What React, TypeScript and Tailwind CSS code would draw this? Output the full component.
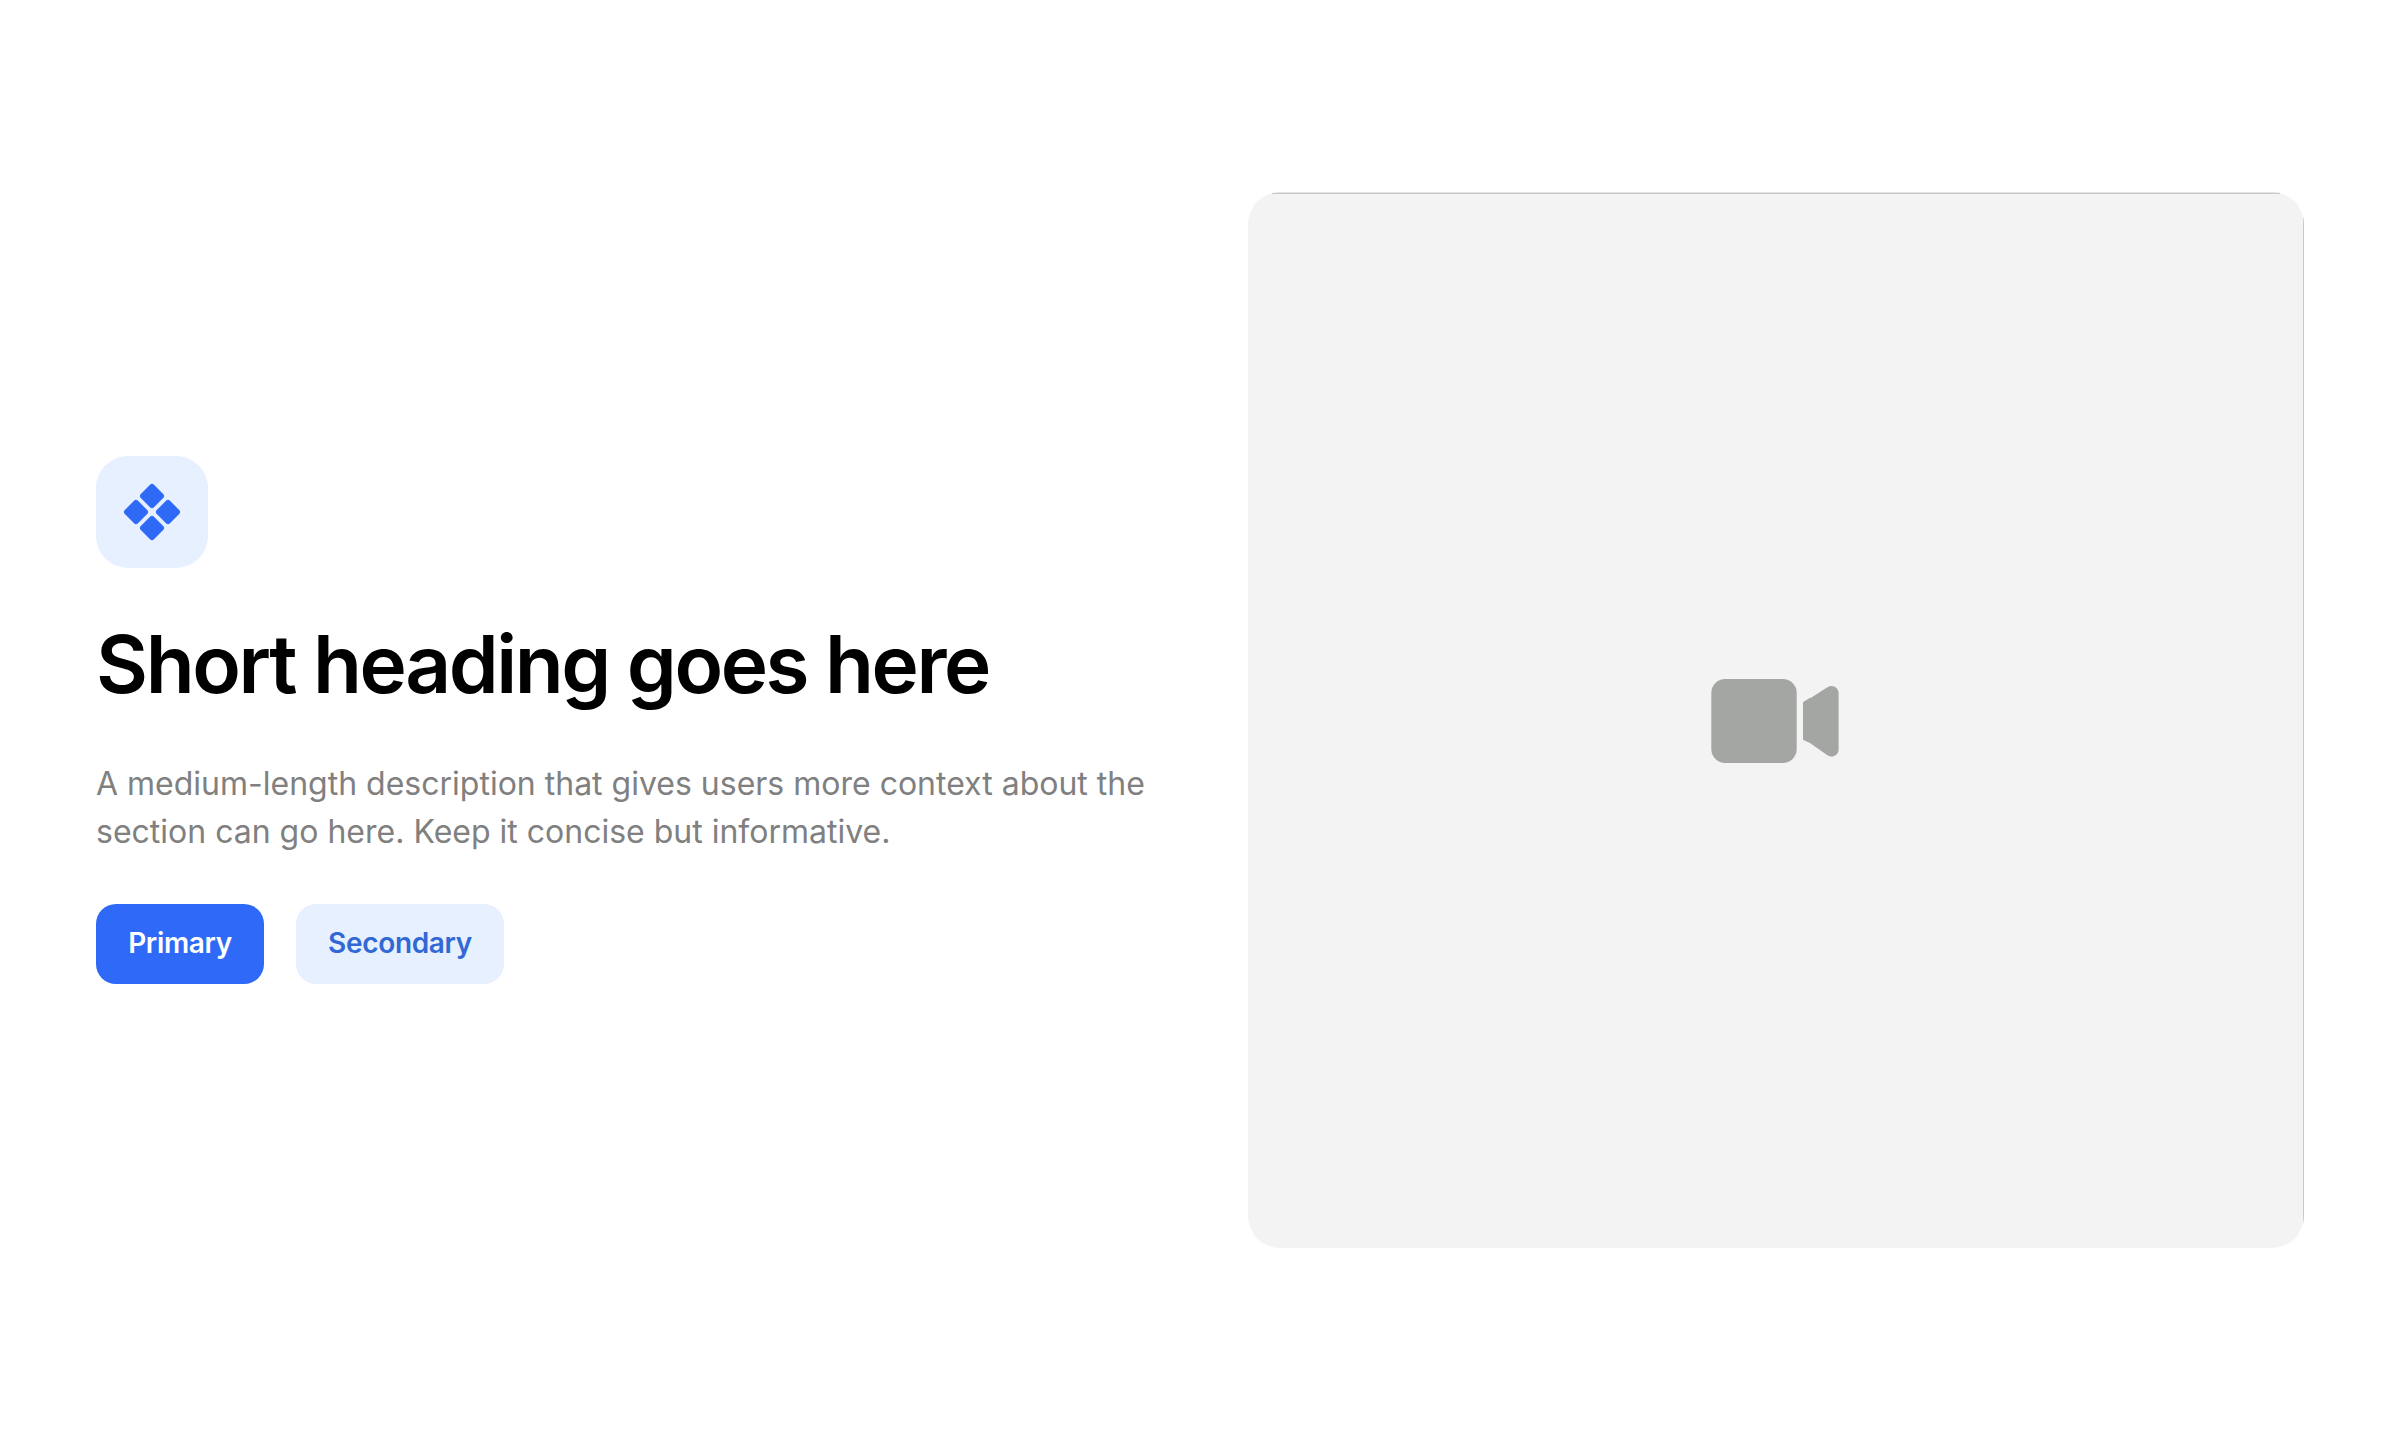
import React from "react";

type ButtonProps = {
  label: string;
  variant: "primary" | "secondary";
};

const BUTTON_STYLES: Record<ButtonProps["variant"], string> = {
  primary: "w-[168px] bg-[#2e69f8] text-white",
  secondary: "w-[208px] bg-[#e6f0ff] text-[#3268d6]",
};

function Button({ label, variant }: ButtonProps) {
  return (
    <button
      type="button"
      className={`flex h-20 items-center justify-center rounded-[20px] pb-0.5 text-[28px] font-semibold tracking-[-0.012em] ${BUTTON_STYLES[variant]}`}
    >
      {label}
    </button>
  );
}

function DiamondsIcon() {
  return (
    <svg viewBox="0 0 56 56" className="h-14 w-14 overflow-visible" fill="#2e69f8">
      <g transform="rotate(45 28 28)">
        <rect x="7.4" y="7.4" width="18.6" height="18.6" rx="2.8" />
        <rect x="30" y="7.4" width="18.6" height="18.6" rx="2.8" />
        <rect x="7.4" y="30" width="18.6" height="18.6" rx="2.8" />
        <rect x="30" y="30" width="18.6" height="18.6" rx="2.8" />
      </g>
    </svg>
  );
}

function VideoIcon() {
  return (
    <svg viewBox="0 0 128 84" className="mt-0.5 mr-0.5 h-[84px] w-32" fill="#a4a6a3">
      <rect x="0.3" width="85.4" height="84" rx="14" />
      <path d="M92 23.2 L98.2 19.2 L100.4 18.6 L116.4 8.2 C121.4 5 127.6 8.4 127.6 14 V70.4 C127.6 76 121.4 79.4 116.4 76.2 L98.6 63.8 L96.6 63 L92 60.8 Z" />
    </svg>
  );
}

export default function App() {
  return (
    <main className="grid h-[1440px] w-full grid-cols-2 items-center gap-24 bg-white px-24 font-['Inter',sans-serif]">
      <section className="flex flex-col items-start">
        <div className="flex h-28 w-28 items-center justify-center rounded-[32px] bg-[#e6f0ff]">
          <DiamondsIcon />
        </div>

        <h1 className="mt-12 whitespace-nowrap text-[80px] leading-[96px] font-semibold tracking-[-0.03em] text-black">
          Short heading goes here
        </h1>

        <p className="mt-12 text-[32px] leading-[48px] whitespace-nowrap text-[#808080]">
          A medium-length description that gives users more context about the
          <br />
          section can go here. Keep it concise but informative.
        </p>

        <div className="mt-12 flex gap-8">
          <Button label="Primary" variant="primary" />
          <Button label="Secondary" variant="secondary" />
        </div>
      </section>

      {/* media placeholder, hairline on the top and right edges */}
      <section className="relative flex h-[1056px] w-[1056px] items-center justify-center justify-self-end overflow-hidden rounded-[32px] bg-[#f3f3f3]">
        <div className="absolute inset-x-6 top-0 h-px bg-[#e2e2e2]" />
        <div className="absolute inset-x-6 top-px h-px bg-[#c8c8c8]" />
        <div className="absolute inset-y-6 right-0 w-px bg-[#c8c8c8]" />
        <VideoIcon />
      </section>
    </main>
  );
}
